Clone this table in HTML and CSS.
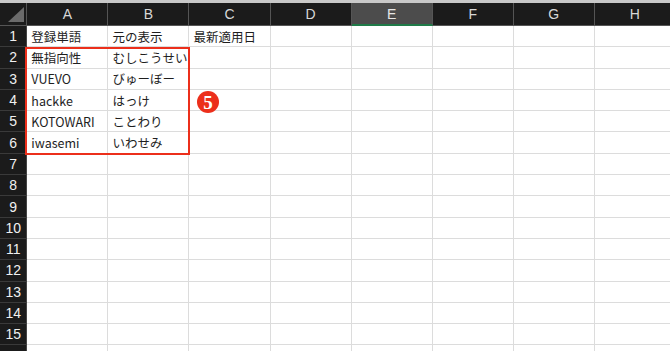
FILE: index.html
```html
<!DOCTYPE html>
<html lang="ja">
<head>
    <meta charset="UTF-8">
    <meta name="viewport" content="width=device-width, initial-scale=1.0">
    <title>登録単語</title>
    <link rel="stylesheet" href="styles.css">
</head>
<body>
    <div class="top-strip"></div>
    <div class="sheet">
        <table class="grid">
            <thead>
                <tr>
                    <th class="corner">
                        <svg width="16" height="15" viewBox="0 0 16 15"><polygon points="0,15 16,15 16,0" fill="#6b6b6b"/></svg>
                    </th>
                    <th>A</th><th>B</th><th>C</th><th>D</th>
                    <th class="selected">E</th>
                    <th>F</th><th>G</th><th>H</th><th></th>
                </tr>
            </thead>
            <tbody>
                <tr><th>1</th><td>登録単語</td><td>元の表示</td><td>最新適用日</td><td></td><td></td><td></td><td></td><td></td><td></td></tr>
                <tr><th>2</th><td>無指向性</td><td>むしこうせい</td><td></td><td></td><td></td><td></td><td></td><td></td><td></td></tr>
                <tr><th>3</th><td>VUEVO</td><td>びゅーぼー</td><td></td><td></td><td></td><td></td><td></td><td></td><td></td></tr>
                <tr><th>4</th><td>hackke</td><td>はっけ</td><td></td><td></td><td></td><td></td><td></td><td></td><td></td></tr>
                <tr><th>5</th><td>KOTOWARI</td><td>ことわり</td><td></td><td></td><td></td><td></td><td></td><td></td><td></td></tr>
                <tr><th>6</th><td>iwasemi</td><td>いわせみ</td><td></td><td></td><td></td><td></td><td></td><td></td><td></td></tr>
                <tr><th>7</th><td></td><td></td><td></td><td></td><td></td><td></td><td></td><td></td><td></td></tr>
                <tr><th>8</th><td></td><td></td><td></td><td></td><td></td><td></td><td></td><td></td><td></td></tr>
                <tr><th>9</th><td></td><td></td><td></td><td></td><td></td><td></td><td></td><td></td><td></td></tr>
                <tr><th>10</th><td></td><td></td><td></td><td></td><td></td><td></td><td></td><td></td><td></td></tr>
                <tr><th>11</th><td></td><td></td><td></td><td></td><td></td><td></td><td></td><td></td><td></td></tr>
                <tr><th>12</th><td></td><td></td><td></td><td></td><td></td><td></td><td></td><td></td><td></td></tr>
                <tr><th>13</th><td></td><td></td><td></td><td></td><td></td><td></td><td></td><td></td><td></td></tr>
                <tr><th>14</th><td></td><td></td><td></td><td></td><td></td><td></td><td></td><td></td><td></td></tr>
                <tr><th>15</th><td></td><td></td><td></td><td></td><td></td><td></td><td></td><td></td><td></td></tr>
                <tr><th>16</th><td></td><td></td><td></td><td></td><td></td><td></td><td></td><td></td><td></td></tr>
            </tbody>
        </table>
        <div class="mark-box"></div>
        <div class="step-badge">5</div>
    </div>
</body>
</html>
```

FILE: styles.css
```css
body {
    margin: 0;
    background: #fff;
    overflow: hidden;
    font-family: "Liberation Sans", "Noto Sans CJK JP", sans-serif;
}
.top-strip {
    height: 3px;
    background: #c9c9c9;
}
.sheet {
    position: relative;
}
.grid {
    border-collapse: separate;
    border-spacing: 0;
    table-layout: fixed;
    width: 757px;
}
.grid th,
.grid td {
    box-sizing: border-box;
    padding: 0;
    white-space: nowrap;
    overflow: hidden;
}
.grid thead th {
    height: 23px;
    width: 80px;
    background: #1b1b1b;
    color: #d8d8d8;
    font-size: 14px;
    font-weight: normal;
    border-right: 1px solid #555;
    border-bottom: 1px solid #555;
    text-align: center;
}
.grid thead th.corner {
    width: 27px;
    text-align: right;
    vertical-align: bottom;
    line-height: 0;
    padding: 0 2px 3px 0;
}
.grid thead th.selected {
    background: #4c4c4c;
    color: #e6e6e6;
    border-bottom: 2px solid #1f7a48;
}
.grid tbody tr {
    height: 21.3px;
}
.grid tbody th {
    width: 27px;
    background: #1b1b1b;
    color: #f0f0f0;
    font-size: 14px;
    font-weight: normal;
    text-align: center;
    border-right: 1px solid #444;
    border-bottom: 1px solid #3a3a3a;
}
.grid tbody td {
    font-family: "Noto Sans CJK JP", sans-serif;
    font-size: 12.5px;
    color: #1e1e1e;
    padding-left: 4px;
    border-right: 1px solid #dcdcdc;
    border-bottom: 1px solid #dcdcdc;
}
.mark-box {
    position: absolute;
    left: 25px;
    top: 44px;
    width: 165px;
    height: 108px;
    box-sizing: border-box;
    border: 2.5px solid #ec2f1b;
}
.step-badge {
    position: absolute;
    left: 197px;
    top: 88px;
    width: 22px;
    height: 22px;
    border-radius: 50%;
    background: #ec2f1b;
    color: #fff;
    font-family: "Liberation Serif", serif;
    font-weight: bold;
    font-size: 19px;
    line-height: 23px;
    text-align: center;
}
```
